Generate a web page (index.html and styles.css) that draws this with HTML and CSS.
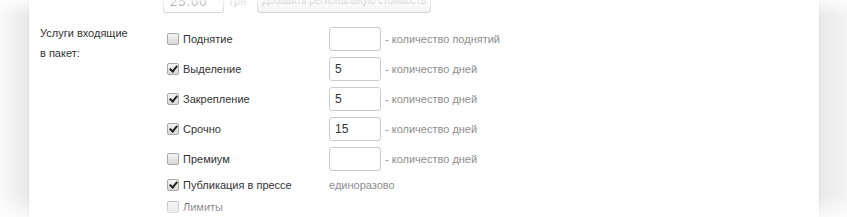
FILE: index.html
```html
<!DOCTYPE html>
<html lang="ru">
<head>
  <meta charset="UTF-8">
  <title>Услуги пакета</title>
  <link rel="stylesheet" href="styles.css">
</head>
<body>

  <div class="page">
    <div class="panel">

      <div class="price-row">
        <input type="text" class="price-input" value="25.00">
        <span class="currency">грн</span>
        <span class="region-btn">Добавить региональную стоимость</span>
      </div>

      <div class="group">
        <div class="group-label">Услуги входящие<br>в пакет:</div>
        <div class="services">
          <div class="service">
            <label class="check"><span class="box"></span>Поднятие</label>
            <input type="text" class="count-input">
            <span class="hint">- количество поднятий</span>
          </div>
          <div class="service">
            <label class="check"><span class="box checked"></span>Выделение</label>
            <input type="text" class="count-input" value="5">
            <span class="hint">- количество дней</span>
          </div>
          <div class="service">
            <label class="check"><span class="box checked"></span>Закрепление</label>
            <input type="text" class="count-input" value="5">
            <span class="hint">- количество дней</span>
          </div>
          <div class="service">
            <label class="check"><span class="box checked"></span>Срочно</label>
            <input type="text" class="count-input" value="15">
            <span class="hint">- количество дней</span>
          </div>
          <div class="service">
            <label class="check"><span class="box"></span>Премиум</label>
            <input type="text" class="count-input">
            <span class="hint">- количество дней</span>
          </div>
          <div class="service short">
            <label class="check"><span class="box checked"></span>Публикация в прессе</label>
            <span class="hint once">единоразово</span>
          </div>
          <div class="service short">
            <label class="check"><span class="box"></span>Лимиты</label>
          </div>
        </div>
      </div>

    </div>
    <div class="fade"></div>
  </div>

</body>
</html>
```

FILE: styles.css
```css
body {
  margin: 0;
  font-family: "Liberation Sans", Arial, sans-serif;
  font-size: 11px;
  color: #333;
  background: #fff;
}
.page {
  position: relative;
  height: 217px;
  overflow: hidden;
  padding: 0 28px 0 29px;
  background:
    linear-gradient(to right, #fafafa 0, #e9e9e9 27px, #e9e9e9 calc(100% - 26px), #f4f4f4 100%);
}
.panel {
  display: flow-root;
  height: 100%;
  background: #fff;
  padding-left: 11px;
  box-shadow: 0 0 2px rgba(0, 0, 0, 0.12);
}
.price-row {
  display: flex;
  align-items: center;
  height: 24px;
  margin-top: -11px;
  margin-bottom: 10px;
}
.price-input {
  box-sizing: border-box;
  width: 61px;
  height: 24px;
  margin: 0 6px 0 123px;
  padding: 0 6px;
  border: 1px solid #ccc;
  border-radius: 3px;
  font: inherit;
  font-size: 13px;
  letter-spacing: 1px;
  color: #555;
}
.currency {
  color: #999;
  margin-right: 11px;
}
.region-btn {
  box-sizing: border-box;
  height: 24px;
  line-height: 22px;
  padding: 0 4px;
  border: 1px solid #ccc;
  border-radius: 3px;
  background: #f2f2f2;
  color: #888;
  font-size: 10px;
}
.group {
  display: flex;
}
.group-label {
  width: 127px;
  line-height: 20px;
}
.services {
  display: flex;
  flex-direction: column;
  gap: 6px;
  padding-top: 4px;
}
.service {
  display: flex;
  align-items: center;
  height: 24px;
}
.service.short {
  height: 16px;
}
.check {
  display: flex;
  align-items: center;
  width: 162px;
}
.box {
  box-sizing: border-box;
  width: 12px;
  height: 12px;
  margin-right: 4px;
  border: 1px solid #a9a9a9;
  border-radius: 2px;
  background: linear-gradient(#f4f4f4, #d9d9d9);
  position: relative;
}
.box.checked::after {
  content: "";
  position: absolute;
  left: 3px;
  top: 0px;
  width: 3px;
  height: 6px;
  border: solid #222;
  border-width: 0 2px 2px 0;
  transform: rotate(40deg);
}
.count-input {
  box-sizing: border-box;
  width: 52px;
  height: 24px;
  padding: 0 5px;
  margin-right: 4px;
  border: 1px solid #ccc;
  border-radius: 3px;
  font: inherit;
  font-size: 12px;
  color: #333;
}
.hint {
  color: #8e8e8e;
}
.fade {
  position: absolute;
  inset: 0;
  pointer-events: none;
  background: linear-gradient(rgba(255, 255, 255, 0.8) 0, rgba(255, 255, 255, 0) 16px, rgba(255, 255, 255, 0) 195px, rgba(255, 255, 255, 0.75) 217px);
}
```
